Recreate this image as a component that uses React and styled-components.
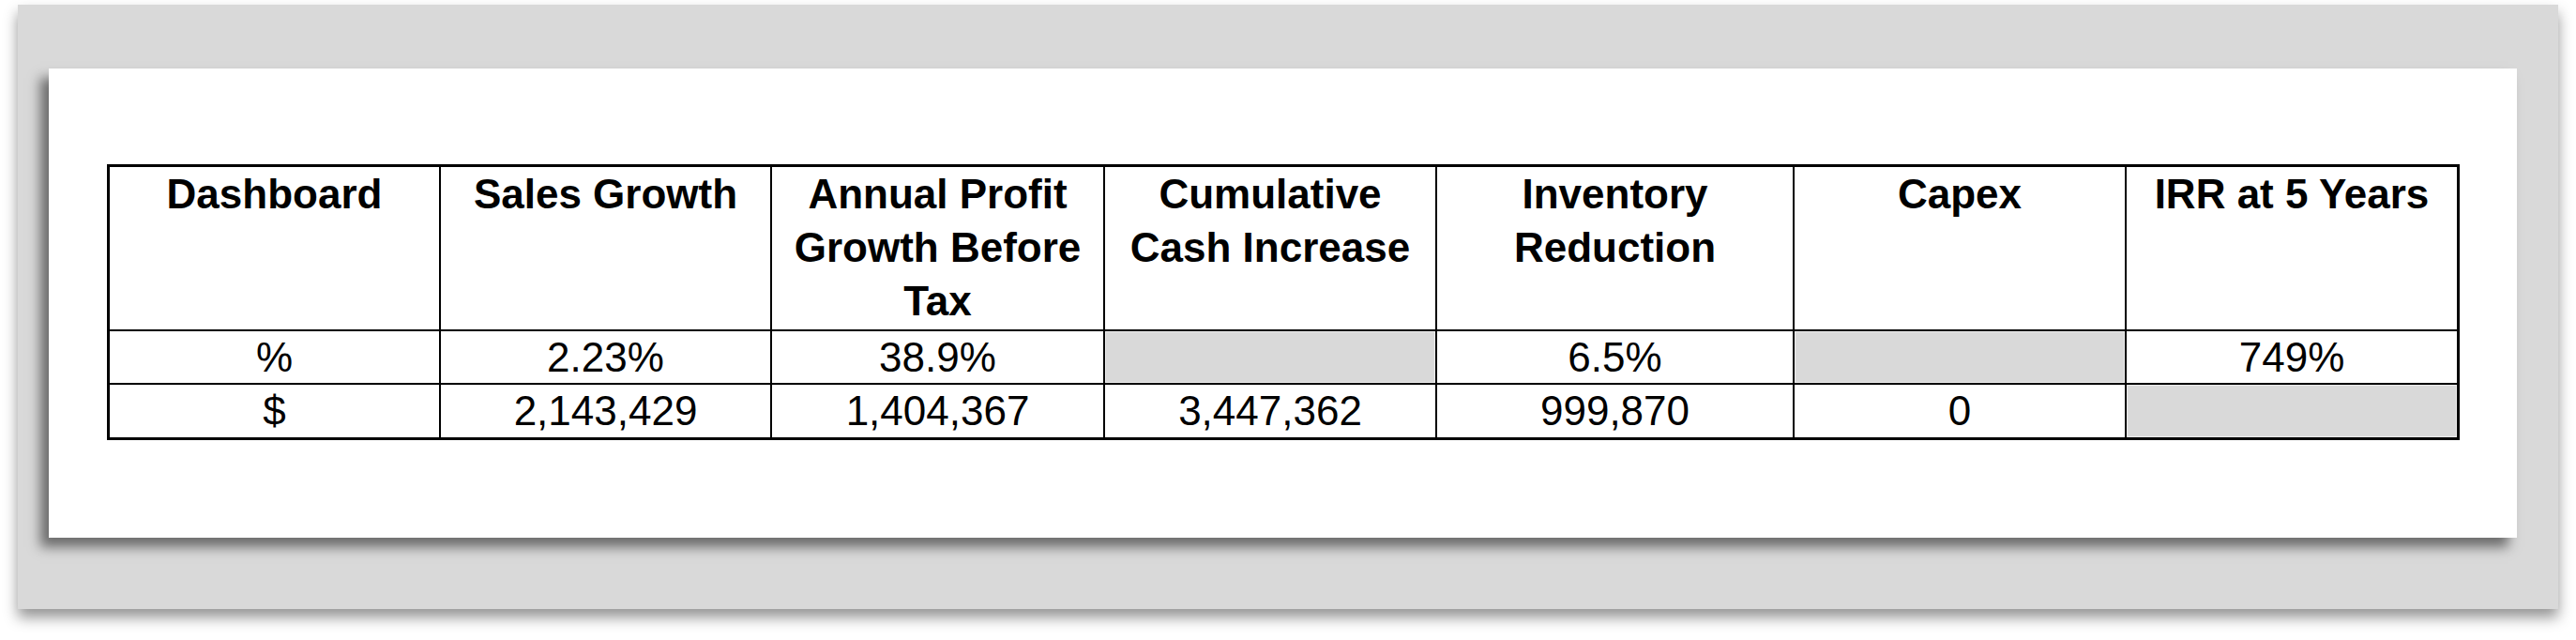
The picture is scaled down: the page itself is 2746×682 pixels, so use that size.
import React from "react";
import styled, { createGlobalStyle } from "styled-components";

const GlobalStyle = createGlobalStyle`
  html, body {
    margin: 0;
    padding: 0;
    background: #ffffff;
  }
  body {
    font-family: "Liberation Sans", Arial, sans-serif;
    color: #000;
  }
`;

const Page = styled.div`
  width: 2746px;
  height: 682px;
  box-sizing: border-box;
  padding: 5px 19px 0 19px;
  background: #ffffff;
  overflow: hidden;
`;

const Mat = styled.div`
  width: 2708px;
  height: 644px;
  box-sizing: border-box;
  padding: 68px 44px 76px 33px;
  background: #d9d9d9;
  box-shadow: 0 9px 14px rgba(0, 0, 0, 0.42);
`;

const Sheet = styled.div`
  width: 2631px;
  height: 500px;
  box-sizing: border-box;
  padding: 102px 61px 0 62px;
  background: #ffffff;
  box-shadow: -9px 10px 12px rgba(0, 0, 0, 0.5);
`;

const Table = styled.table`
  width: 2508px;
  table-layout: fixed;
  border-collapse: separate;
  border-spacing: 0;
  border: 3px solid #000;
  font-family: "Liberation Sans", Arial, sans-serif;
  font-size: 44px;
  color: #000;
`;

const Col = styled.col`
  width: ${(p) => p.$w}px;
`;

const Row = styled.tr`
  height: ${(p) => p.$h}px;
  & > *:last-child {
    border-right: none;
  }
  & > * {
    border-bottom: ${(p) => (p.$last ? "none" : "2px solid #000")};
  }
`;

const HeadCell = styled.th`
  box-sizing: border-box;
  padding: 0;
  border-right: 2px solid #000;
  font-weight: bold;
  line-height: 57px;
  text-align: center;
  vertical-align: top;
  white-space: nowrap;
`;

const Cell = styled.td`
  box-sizing: border-box;
  padding: 0;
  border-right: 2px solid #000;
  font-weight: normal;
  line-height: 52px;
  text-align: center;
  vertical-align: middle;
  white-space: nowrap;
  background: ${(p) => (p.$blank ? "#d9d9d9" : "transparent")};
  box-shadow: ${(p) => (p.$blank ? "inset 0 0 0 1px #ededed" : "none")};
`;

const widths = [353, 353, 355, 354, 381, 354, 352];

const headers = [
  ["Dashboard"],
  ["Sales Growth"],
  ["Annual Profit", "Growth Before", "Tax"],
  ["Cumulative", "Cash Increase"],
  ["Inventory", "Reduction"],
  ["Capex"],
  ["IRR at 5 Years"],
];

const rows = [
  { h: 57, cells: ["%", "2.23%", "38.9%", null, "6.5%", null, "749%"] },
  { h: 56, cells: ["$", "2,143,429", "1,404,367", "3,447,362", "999,870", "0", null] },
];

export default function App() {
  return (
    <>
      <GlobalStyle />
      <Page>
        <Mat>
          <Sheet>
            <Table>
              <colgroup>
                {widths.map((w, i) => (
                  <Col key={i} $w={w} />
                ))}
              </colgroup>
              <thead>
                <Row $h={175}>
                  {headers.map((lines, i) => (
                    <HeadCell key={i}>
                      {lines.map((l, j) => (
                        <React.Fragment key={j}>
                          {j > 0 && <br />}
                          {l}
                        </React.Fragment>
                      ))}
                    </HeadCell>
                  ))}
                </Row>
              </thead>
              <tbody>
                {rows.map((r, i) => (
                  <Row key={i} $h={r.h} $last={i === rows.length - 1}>
                    {r.cells.map((c, j) => (
                      <Cell key={j} $blank={c === null}>
                        {c}
                      </Cell>
                    ))}
                  </Row>
                ))}
              </tbody>
            </Table>
          </Sheet>
        </Mat>
      </Page>
    </>
  );
}
